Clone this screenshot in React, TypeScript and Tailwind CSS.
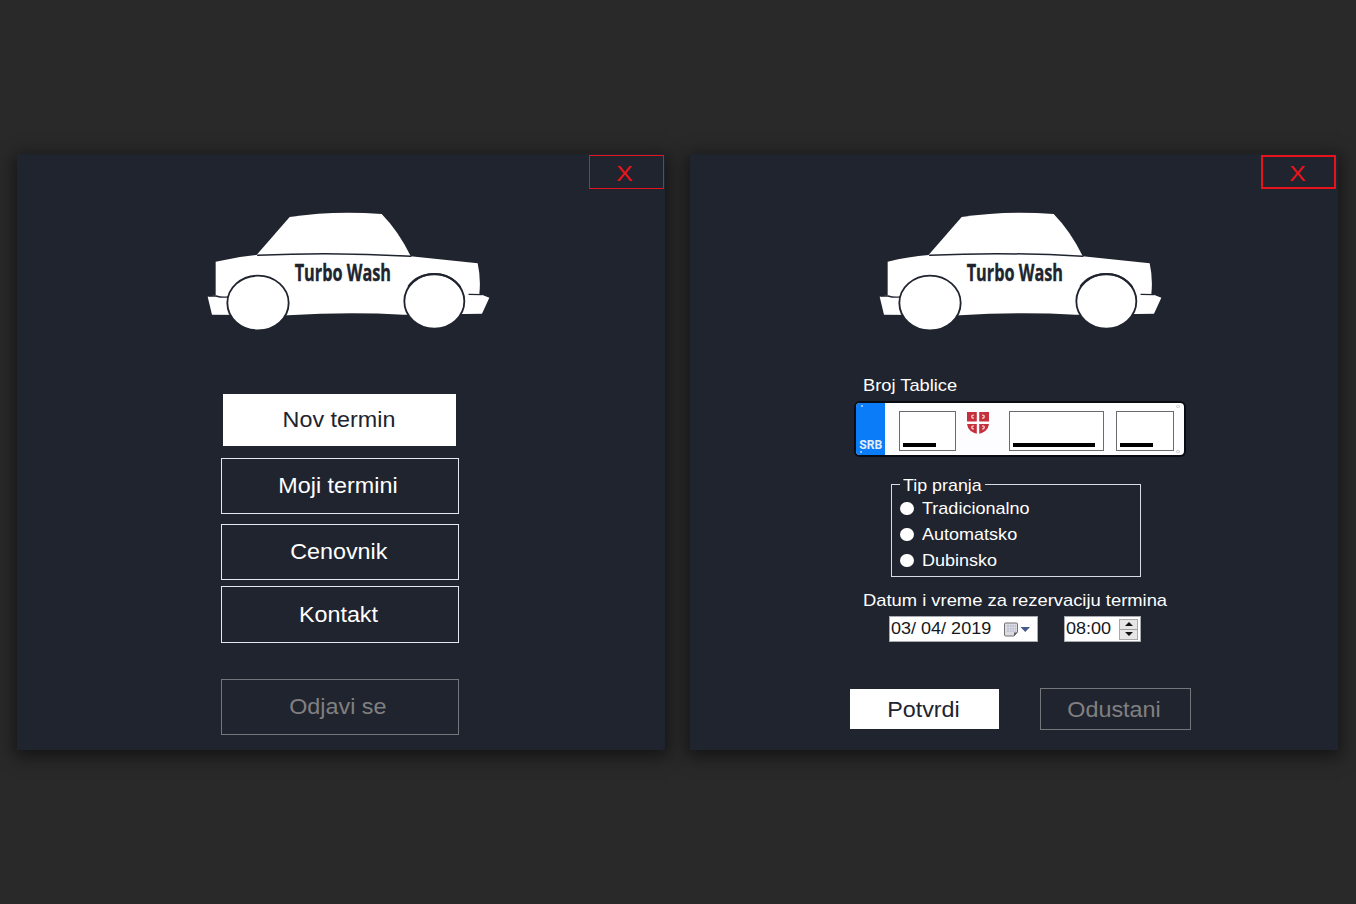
import type { ReactNode } from 'react';

function CarLogo({ className }: { className: string }) {
  return (
    <svg viewBox="51 48 849 363" className={`h-[121px] w-[283px] shrink-0 ${className}`}>
      <g fill="#fff">
        <path d="M199 181 L299 66 Q430 46 575 57 Q625 108 662 183 L662 195 L199 195Z" />
        <path d="M77 200 Q140 185 200 180 Q430 172 662 184 L863 205 Q873 250 868 296 L898 308 L876 356 L824 357 L640 359 Q470 350 294 361 L66 359 L53 305 L77 301Z" />
      </g>
      <g fill="none" stroke="#20242f" strokeLinecap="round">
        <path d="M203 181 Q430 170 662 184" strokeWidth="4.5" />
        <path d="M58 303 L78 303 Q98 309 117 305" strokeWidth="4" />
        <path d="M837 298 L875 299" strokeWidth="4" />
      </g>
      <g fill="#fff" stroke="#20242f">
        <ellipse cx="204" cy="324" rx="92" ry="82" strokeWidth="5.5" />
        <ellipse cx="733" cy="319" rx="90" ry="82" strokeWidth="5.5" />
      </g>
      <path d="M655 275 Q680 238 733 237 Q785 239 811 277" fill="none" stroke="#20242f" strokeWidth="6" />
      <text
        x="314"
        y="258"
        fontSize="70"
        fontWeight="700"
        textLength="289"
        lengthAdjust="spacingAndGlyphs"
        fill="#20242f"
        stroke="#20242f"
        strokeWidth="1.2"
        className="font-['Open_Sans',sans-serif]"
      >
        Turbo Wash
      </text>
    </svg>
  );
}

function Panel({ children, thick }: { children: ReactNode; thick?: boolean }) {
  return (
    <section className="flex h-[596px] w-[648px] shrink-0 flex-col bg-[#20242f] shadow-[0_4px_16px_3px_rgba(0,0,0,0.5)]">
      <div className={`flex h-[57px] shrink-0 items-start justify-end pt-px ${thick ? 'pr-[2px]' : 'pr-px'}`}>
        <button
          className={`flex h-[34px] w-[75px] items-center justify-center pt-[4px] text-[22.5px] leading-none text-[#ee1219] ${
            thick ? 'border-2 border-[#e8131a] pr-[2px]' : 'border border-[#e2141d] pr-[3px]'
          }`}
        >
          <span className="scale-x-110">X</span>
        </button>
      </div>
      <CarLogo className={thick ? 'ml-[189px]' : 'ml-[190px]'} />
      {children}
    </section>
  );
}

function Button({ children, className }: { children: ReactNode; className: string }) {
  return (
    <button className={`flex shrink-0 items-center justify-center text-[21.5px] leading-none ${className}`}>
      <span className="scale-x-[1.085] whitespace-nowrap">{children}</span>
    </button>
  );
}

function Label({ children, stretch = 'scale-x-[1.06]' }: { children: ReactNode; stretch?: string }) {
  return <span className={`inline-block origin-left text-[17px] whitespace-nowrap ${stretch}`}>{children}</span>;
}

function Slot({ className, bar }: { className: string; bar: string }) {
  return (
    <div className={`flex h-10 items-end border border-[#6b6b6b] bg-white pb-[3px] pl-[3px] ${className}`}>
      <div className={`h-[4px] bg-black ${bar}`} />
    </div>
  );
}

function Shield() {
  return (
    <svg viewBox="0 0 22 22" className="mt-[9px] ml-[11px] h-[22px] w-[22px] shrink-0">
      <path d="M0 0H22V12Q21 20 11 22Q1 20 0 12Z" fill="#c5303c" />
      <path d="M9.8 0h2.4v22H9.8z M0 9.6h22v2.4H0z" fill="#fff" />
      <g fill="none" stroke="#f6cfd1" strokeWidth="1.4">
        <path d="M6.8 3.2Q4.5 3 4.8 4.8Q5 6.3 6.8 6.2M15.2 3.2Q17.5 3 17.2 4.8Q17 6.3 15.2 6.2M6.8 14Q4.5 13.8 4.8 15.6Q5 17 6.8 17M15.2 14Q17.5 13.8 17.2 15.6Q17 17 15.2 17" />
      </g>
    </svg>
  );
}

function Plate() {
  return (
    <div className="ml-[164px] flex h-[56px] w-[332px] shrink-0 overflow-hidden rounded-[6px] border-2 border-[#090b12] bg-[#fdfcfe]">
      <div className="flex w-[29px] flex-col items-center justify-between bg-[#0a7cf7] py-[2px]">
        <i className="mr-[18px] h-[2px] w-[2px] rounded-full bg-[#b9dcff]" />
        <div className="flex flex-col items-center">
          <span className="scale-x-90 font-['Roboto',sans-serif] text-[13.5px] leading-[13px] font-bold text-[#e4ecf5]">
            SRB
          </span>
          <i className="mr-[18px] h-[2px] w-[2px] rounded-full bg-[#b9dcff]" />
        </div>
      </div>
      <div className="flex pt-[8px]">
        <Slot className="ml-[13.500px] w-[57.500px]" bar="w-[33px]" />
        <div className="-mt-[8px] w-[53px]">
          <Shield />
        </div>
        <Slot className="w-[95px]" bar="w-[82px]" />
        <Slot className="ml-[12px] w-[58px]" bar="w-[33px]" />
      </div>
      <div className="ml-[2px] flex flex-col justify-between py-[2px]">
        <i className="h-[3px] w-[4px] rounded-full border border-[#c5c5ca]" />
        <i className="h-[3px] w-[4px] rounded-full border border-[#c5c5ca]" />
      </div>
    </div>
  );
}

function CalendarIcon() {
  return (
    <svg viewBox="0 0 26 15" className="h-[15px] w-[26px]">
      <path d="M1.5 1h11q1 0 1 1v8l-3.500 4h-8.500q-1 0-1-1v-11q0-1 1-1z" fill="#dddbe2" stroke="#746f72" />
      <path d="M3 3h9v7h-9z" fill="#bfc1d3" />
      <path d="M3 5.500h9M3 8h9M5.500 3v7M8 3v7M10.500 3v7" stroke="#dfe0ea" strokeWidth=".6" />
      <path d="M10 14v-3.500h3.500z" fill="#625d60" />
      <path d="M16.500 5h9.500l-4.750 5z" fill="#43598a" />
    </svg>
  );
}

function Spinner() {
  return (
    <div className="flex h-[21px] w-[19px] flex-col border border-[#a9a9a9] bg-[#e6e6e6]">
      <div className="flex flex-1 items-center justify-center border-b border-[#a0a0a0]">
        <svg viewBox="0 0 8 4" className="h-[4px] w-[8px]">
          <path d="M4 0L8 4H0z" fill="#111" />
        </svg>
      </div>
      <div className="flex flex-1 items-center justify-center">
        <svg viewBox="0 0 8 4" className="h-[4px] w-[8px]">
          <path d="M0 0H8L4 4z" fill="#111" />
        </svg>
      </div>
    </div>
  );
}

const washTypes = ['Tradicionalno', 'Automatsko', 'Dubinsko'];

export default function App() {
  return (
    <main className="flex h-[904px] w-[1356px] gap-[25px] overflow-hidden bg-[#292929] pt-[154px] pl-[17px] font-['Liberation_Sans',Arial,sans-serif] text-white">
      <Panel>
        <nav className="mt-[62px] ml-[204px] flex w-[238px] flex-col">
          <Button className="mr-[3px] ml-[2px] h-[52px] bg-white pt-[2px] pr-[2px] text-[#20242f]">Nov termin</Button>
          <Button className="mt-[12px] h-[56px] border border-[#e6e8f0] pt-[2px] pr-[4px]">Moji termini</Button>
          <Button className="mt-[10px] h-[56px] border border-[#e6e8f0] pt-[2px] pr-[2px]">Cenovnik</Button>
          <Button className="mt-[6px] h-[57px] border border-[#e6e8f0] pt-[2px] pr-[3px]">Kontakt</Button>
          <Button className="mt-[36px] h-[56px] border border-[#74767b] pt-[2px] pr-[4px] text-[#808080]">
            Odjavi se
          </Button>
        </nav>
      </Panel>

      <Panel thick>
        <div className="mt-[43px] ml-[172.500px] h-[21px] shrink-0 leading-[22px]">
          <Label stretch="scale-x-[1.075]">Broj Tablice</Label>
        </div>
        <div className="mt-[5px] flex">
          <Plate />
        </div>
        <fieldset className="mt-[17px] ml-[201px] h-[103px] w-[250px] shrink-0 border border-[#d9dbe2] pt-px pl-[8px]">
          <legend className="h-[20px] w-[85px] pl-[2.500px] leading-[23px]">
            <Label stretch="scale-x-[1.05]">Tip pranja</Label>
          </legend>
          {washTypes.map((type) => (
            <label key={type} className="flex h-[26px] items-center gap-[8px] pt-px leading-[26px]">
              <span className="h-[13px] w-[14px] rounded-full bg-white" />
              <span className="pt-px">
                <Label>{type}</Label>
              </span>
            </label>
          ))}
        </fieldset>
        <div className="mt-[13px] ml-[172.500px] h-[21px] shrink-0 leading-[22px]">
          <Label stretch="scale-x-[1.08]">Datum i vreme za rezervaciju termina</Label>
        </div>
        <div className="mt-[5px] ml-[199px] flex h-[26px] shrink-0 gap-[26px] text-[#16181f]">
          <div className="flex w-[149px] items-center justify-between border border-[#a9abb2] bg-white pr-[7px] pl-px">
            <Label>03/ 04/ 2019</Label>
            <CalendarIcon />
          </div>
          <div className="flex w-[77px] items-center justify-between border border-[#a9abb2] bg-white pr-[2px] pl-px">
            <Label>08:00</Label>
            <Spinner />
          </div>
        </div>
        <div className="mt-[46px] ml-[160px] flex h-[42px] shrink-0 items-center gap-[41px]">
          <Button className="h-[40px] w-[149px] bg-white pt-[3px] pr-[3px] text-[#20242f]">Potvrdi</Button>
          <Button className="h-[42px] w-[151px] border border-[#74767b] pt-[3px] pr-[2px] text-[#808080]">
            Odustani
          </Button>
        </div>
      </Panel>
    </main>
  );
}
